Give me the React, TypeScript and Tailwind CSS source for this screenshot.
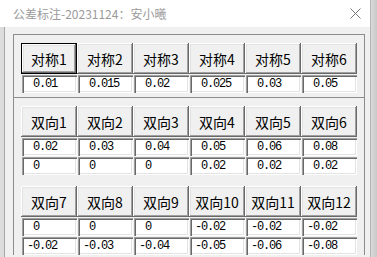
const sym = ["0.01", "0.015", "0.02", "0.025", "0.03", "0.05"];

const groups = [
  {
    labels: ["双向1", "双向2", "双向3", "双向4", "双向5", "双向6"],
    upper: ["0.02", "0.03", "0.04", "0.05", "0.06", "0.08"],
    lower: ["0", "0", "0", "0.02", "0.02", "0.02"],
  },
  {
    labels: ["双向7", "双向8", "双向9", "双向10", "双向11", "双向12"],
    upper: ["0", "0", "0", "-0.02", "-0.02", "-0.02"],
    lower: ["-0.02", "-0.03", "-0.04", "-0.05", "-0.06", "-0.08"],
  },
];

// VB-style Str(): positive numbers get a leading space
const fmt = (v: string) => (v.startsWith("-") ? v : " " + v);

function Btn({ label, focused }: { label: string; focused?: boolean }) {
  return (
    <div className={focused ? "h-[31px] border border-black" : "h-[31px]"}>
      <div className="flex h-full items-center justify-center bg-[#f0f0f0] text-[14px] leading-none text-black shadow-[inset_-1px_-1px_#696969,inset_1px_1px_#ffffff,inset_-2px_-2px_#a0a0a0,inset_2px_2px_#e3e3e3]">
        {label}
      </div>
    </div>
  );
}

function Field({ value }: { value: string }) {
  return (
    <div className="ml-[1px] flex h-[18px] w-[55px] items-center bg-white pl-[5px] font-['Liberation_Mono',monospace] text-[12px] leading-none tracking-[-1.2px] whitespace-pre text-black shadow-[inset_1px_1px_#a0a0a0,inset_2px_2px_#696969,inset_-1px_-1px_#ffffff,inset_-2px_-2px_#e3e3e3]">
      {fmt(value)}
    </div>
  );
}

function Row({ children }: { children: React.ReactNode }) {
  return <div className="grid grid-cols-[repeat(6,56px)]">{children}</div>;
}

export default function App() {
  return (
    <div className="flex h-[257px] w-[377px] overflow-hidden bg-white font-['Noto_Sans_CJK_SC',sans-serif]">
      <div className="flex w-[371px] flex-col border-r border-[#b4b4b4]">
        <div className="flex h-[27px] shrink-0 items-center justify-between bg-white pl-[13px] pr-[9px]">
          <span className="text-[12px] leading-none text-[#9a9a9a]">公差标注-20231124：安小曦</span>
          <svg width="11" height="11" viewBox="0 0 11 11">
            <path d="M0.5 0.5 L10.5 10.5 M10.5 0.5 L0.5 10.5" stroke="#777" strokeWidth="1" />
          </svg>
        </div>
        <div className="flex flex-1">
          <div className="w-[5px] border-r border-[#a8a8a8] bg-[#dcdcdc]" />
          <div className="flex-1 bg-[#f0f0f0] pl-[8px] pt-[7px]">
            <div className="w-[352px] border border-b-0 border-[#8c8c8c]">
              <div className="flex flex-col gap-[1px] pb-[4px] pl-[7px] pt-[8px]">
                <Row>
                  {sym.map((_, i) => (
                    <Btn key={i} label={`对称${i + 1}`} focused={i === 0} />
                  ))}
                </Row>
                <Row>
                  {sym.map((v, i) => (
                    <Field key={i} value={v} />
                  ))}
                </Row>
              </div>
              <div className="h-px bg-[#8c8c8c]" />
              <div className="flex flex-col gap-[11px] pl-[7px] pt-[8px]">
                {groups.map((g, gi) => (
                  <div key={gi} className="flex flex-col gap-[1px]">
                    <Row>
                      {g.labels.map((l) => (
                        <Btn key={l} label={l} />
                      ))}
                    </Row>
                    <Row>
                      {g.upper.map((v, i) => (
                        <Field key={i} value={v} />
                      ))}
                    </Row>
                    <Row>
                      {g.lower.map((v, i) => (
                        <Field key={i} value={v} />
                      ))}
                    </Row>
                  </div>
                ))}
              </div>
            </div>
          </div>
        </div>
      </div>
      <div className="w-[6px] bg-gradient-to-r from-[#dadada] to-[#c8c8c8]" />
    </div>
  );
}
